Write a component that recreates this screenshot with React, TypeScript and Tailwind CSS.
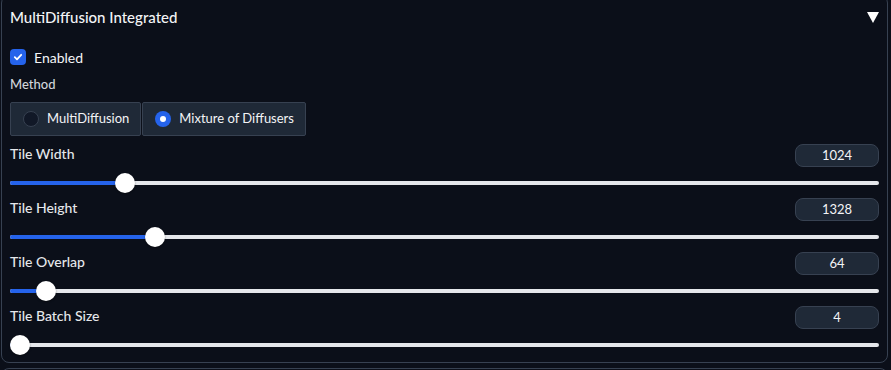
import { useState } from "react";

type ISliderRow = {
  label: string;
  value: number;
  fraction: number;
};

const rows: ISliderRow[] = [
  { label: "Tile Width", value: 1024, fraction: 0.124 },
  { label: "Tile Height", value: 1328, fraction: 0.159 },
  { label: "Tile Overlap", value: 64, fraction: 0.0307 },
  { label: "Tile Batch Size", value: 4, fraction: 0 },
];

const SliderRow = ({ row }: { row: ISliderRow }) => {
  // thumb is 20px wide, track runs the full width
  const thumbLeft = `calc(${row.fraction * 100}% - ${row.fraction * 20}px)`;
  return (
    <div className="flex flex-col">
      <div className="flex items-start justify-between h-[23px]">
        <span className="text-[14px] leading-5 text-[#e5e7eb] font-medium">
          {row.label}
        </span>
        <div className="w-[84px] h-[23px] rounded-lg bg-[#1f2937] border border-[#374151] flex items-center justify-center text-[13px] text-[#f3f4f6]">
          {row.value}
        </div>
      </div>
      <div className="relative h-[20px] mt-[6px] mb-[5px]">
        <div className="absolute left-0 right-0 top-[8px] h-[4px] rounded-full bg-[#e5e7eb]" />
        <div
          className="absolute left-0 top-[8px] h-[4px] rounded-full bg-[#2563eb]"
          style={{ width: `calc(${row.fraction * 100}% - ${row.fraction * 20}px + 10px)` }}
        />
        <div
          className="absolute top-0 w-[20px] h-[20px] rounded-full bg-white shadow-[0_1px_2px_rgba(0,0,0,0.4)]"
          style={{ left: thumbLeft }}
        />
      </div>
    </div>
  );
};

const App = () => {
  const [method, setMethod] = useState<string>("Mixture of Diffusers");
  const [enabled, setEnabled] = useState<boolean>(true);

  return (
    <div
      className="w-[891px] h-[370px] bg-[#0b0f19] overflow-hidden"
      style={{ fontFamily: "Lato, 'Noto Sans', sans-serif" }}
    >
      <div className="ml-[1px] mt-[-5px] w-[887px] h-[368px] border border-[#374151] rounded-lg px-2">
        <div className="flex items-center justify-between h-[42px]">
          <span className="text-[15px] text-[#f3f4f6] font-medium">MultiDiffusion Integrated</span>
          <svg width="12" height="11" viewBox="0 0 12 11" className="mr-0">
            <path d="M0 0 H12 L6 11 Z" fill="white" />
          </svg>
        </div>

        <label
          className="flex items-center gap-2 h-4 mt-[11px] cursor-pointer"
          onClick={() => setEnabled(!enabled)}
        >
          <span className="w-4 h-4 rounded bg-[#2563eb] flex items-center justify-center">
            <svg width="10" height="10" viewBox="0 0 10 10" fill="none">
              <path
                d="M1.8 5.2 L4 7.3 L8.2 2.8"
                stroke="white"
                strokeWidth="1.8"
                strokeLinecap="round"
                strokeLinejoin="round"
              />
            </svg>
          </span>
          <span className="text-[14px] text-[#f3f4f6]">Enabled</span>
        </label>

        <div className="mt-[9px] h-5 text-[13px] leading-5 text-[#d1d5db] font-medium">Method</div>

        <div className="flex gap-[1px] mt-[8px] h-[34px]">
          {["MultiDiffusion", "Mixture of Diffusers"].map((m) => (
            <div
              key={m}
              onClick={() => setMethod(m)}
              className="flex items-center gap-2 pl-3 pr-[11px] border border-[#374151] rounded-[2px] bg-[#1f2937] cursor-pointer"
            >
              {method === m ? (
                <span className="w-4 h-4 rounded-full bg-[#2563eb] flex items-center justify-center">
                  <span className="w-[6px] h-[6px] rounded-full bg-white" />
                </span>
              ) : (
                <span className="w-4 h-4 rounded-full bg-[#111827] border border-[#374151]" />
              )}
              <span className="text-[13px] text-[#f3f4f6]">{m}</span>
            </div>
          ))}
        </div>

        <div className="mt-[8px]">
          {rows.map((row) => (
            <SliderRow key={row.label} row={row} />
          ))}
        </div>
      </div>
      <div className="mt-[5px] ml-[1px] w-[887px] h-[20px] border border-[#374151] rounded-lg" />
    </div>
  );
};

export default App;
